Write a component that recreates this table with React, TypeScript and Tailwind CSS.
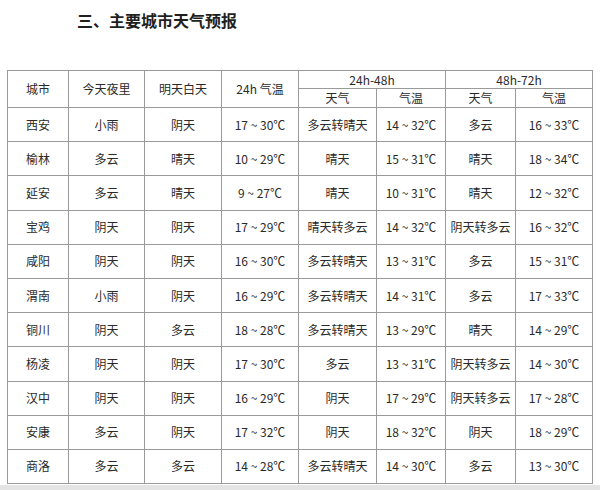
const rows: string[][] = [
  ['西安', '小雨', '阴天', '17 ~ 30℃', '多云转晴天', '14 ~ 32℃', '多云', '16 ~ 33℃'],
  ['榆林', '多云', '晴天', '10 ~ 29℃', '晴天', '15 ~ 31℃', '晴天', '18 ~ 34℃'],
  ['延安', '多云', '晴天', '9 ~ 27℃', '晴天', '10 ~ 31℃', '晴天', '12 ~ 32℃'],
  ['宝鸡', '阴天', '阴天', '17 ~ 29℃', '晴天转多云', '14 ~ 32℃', '阴天转多云', '16 ~ 32℃'],
  ['咸阳', '阴天', '阴天', '16 ~ 30℃', '多云转晴天', '13 ~ 31℃', '多云', '15 ~ 31℃'],
  ['渭南', '小雨', '阴天', '16 ~ 29℃', '多云转晴天', '14 ~ 31℃', '多云', '17 ~ 33℃'],
  ['铜川', '阴天', '多云', '18 ~ 28℃', '多云转晴天', '13 ~ 29℃', '晴天', '14 ~ 29℃'],
  ['杨凌', '阴天', '阴天', '17 ~ 30℃', '多云', '13 ~ 31℃', '阴天转多云', '14 ~ 30℃'],
  ['汉中', '阴天', '阴天', '16 ~ 29℃', '阴天', '17 ~ 29℃', '阴天转多云', '17 ~ 28℃'],
  ['安康', '多云', '阴天', '17 ~ 32℃', '阴天', '18 ~ 32℃', '阴天', '18 ~ 29℃'],
  ['商洛', '多云', '多云', '14 ~ 28℃', '多云转晴天', '14 ~ 30℃', '多云', '13 ~ 30℃'],
];

const widths = [61, 76, 77, 77, 78, 69, 70, 77];

const cell = 'border border-[#9a9a9a] text-center align-middle p-0';

export default function App() {
  return (
    <div
      className="w-[600px] h-[490px] bg-white overflow-hidden text-[#2a2a2a]"
      style={{ fontFamily: '"Noto Sans CJK SC", "Noto Sans", sans-serif' }}
    >
      {/* Title */}
      <div className="pt-[11px] pl-[77px] text-[16px] leading-[18px] font-bold tracking-[0px] text-[#1f1f1f]">
        三、主要城市天气预报
      </div>

      {/* Table */}
      <div className="mt-[41px] ml-[7px]">
        <table className="table-fixed border-collapse text-[12px] leading-[14px] w-[585px]">
          <colgroup>
            {widths.map((w, i) => (
              <col key={i} style={{ width: w }} />
            ))}
          </colgroup>
          <thead>
            <tr className="h-[18px]">
              <th rowSpan={2} className={`${cell} font-normal`}>城市</th>
              <th rowSpan={2} className={`${cell} font-normal`}>今天夜里</th>
              <th rowSpan={2} className={`${cell} font-normal`}>明天白天</th>
              <th rowSpan={2} className={`${cell} font-normal`}>24h 气温</th>
              <th colSpan={2} className={`${cell} font-normal`}>24h-48h</th>
              <th colSpan={2} className={`${cell} font-normal`}>48h-72h</th>
            </tr>
            <tr className="h-[19px]">
              <th className={`${cell} font-normal`}>天气</th>
              <th className={`${cell} font-normal`}>气温</th>
              <th className={`${cell} font-normal`}>天气</th>
              <th className={`${cell} font-normal`}>气温</th>
            </tr>
          </thead>
          <tbody>
            {rows.map((r) => (
              <tr key={r[0]} className="h-[34.2px]">
                {r.map((v, i) => (
                  <td key={i} className={cell}>{v}</td>
                ))}
              </tr>
            ))}
          </tbody>
        </table>
      </div>

      {/* bottom strip */}
      <div className="mt-[1px] h-[8px] bg-[#e4e4e4]" />
    </div>
  );
}
